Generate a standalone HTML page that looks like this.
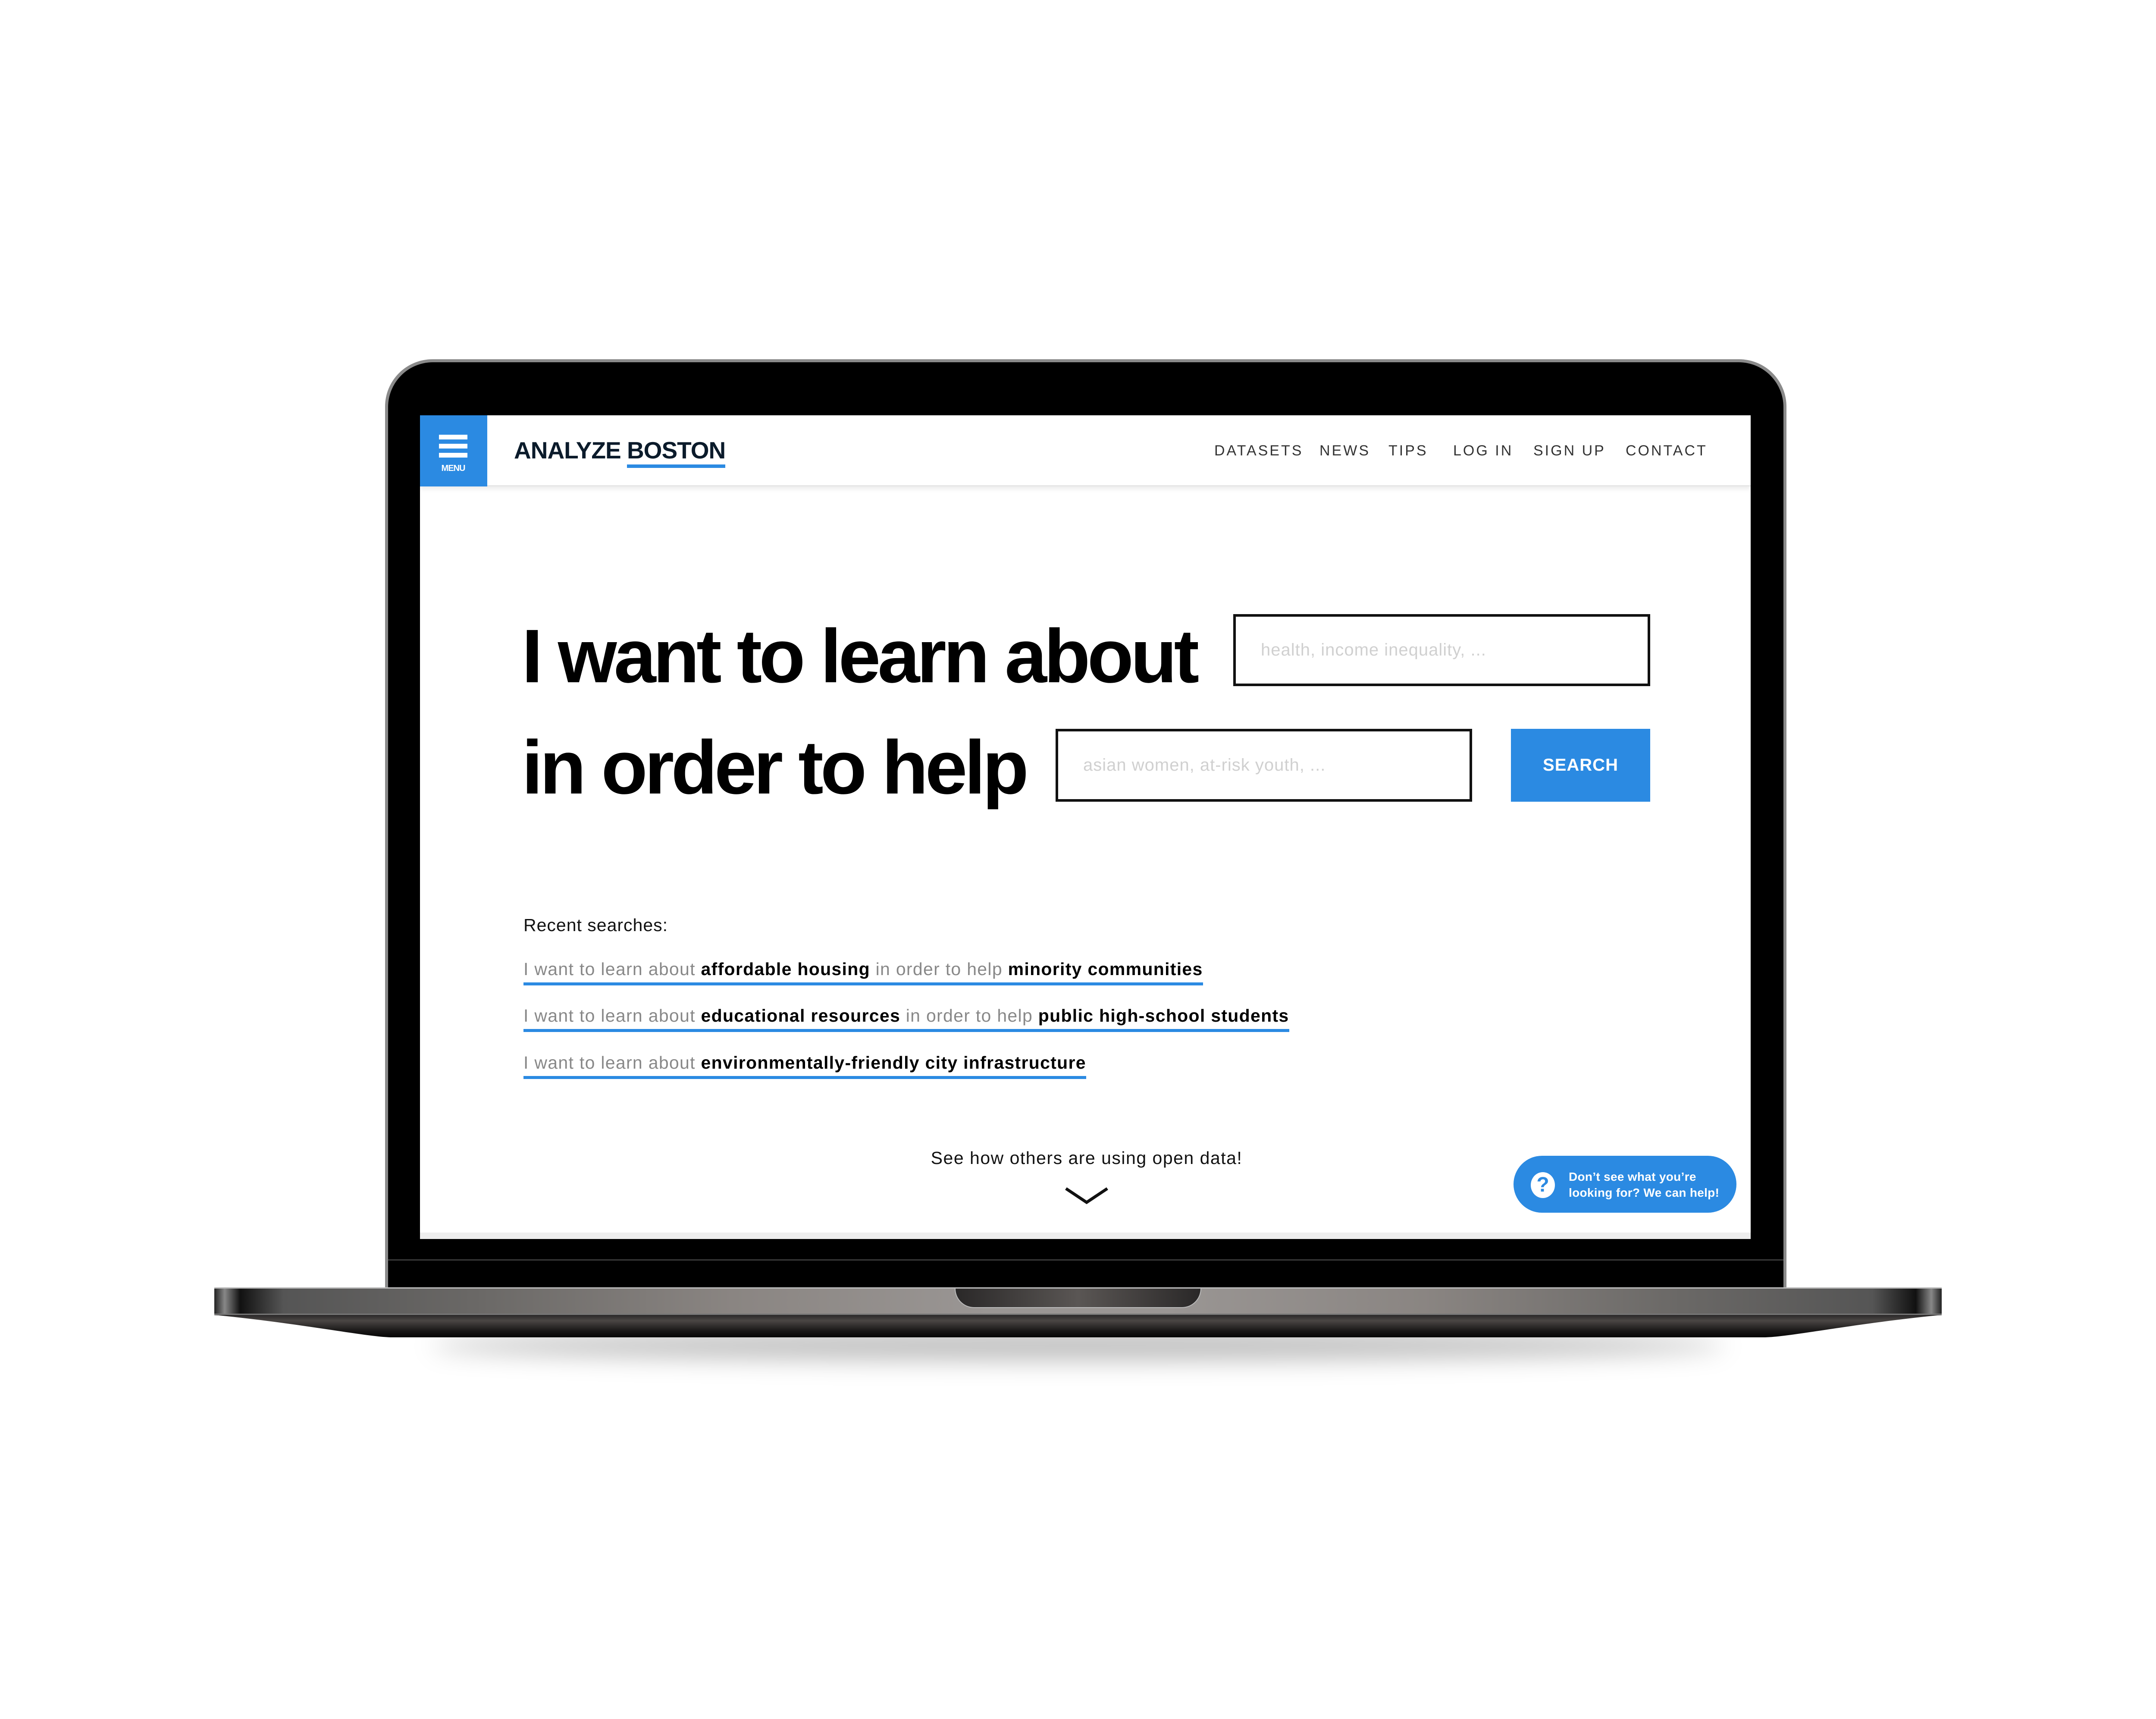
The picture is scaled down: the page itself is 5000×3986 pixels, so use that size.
<!DOCTYPE html>
<html><head><meta charset="utf-8"><style>
*{margin:0;padding:0;box-sizing:border-box}
body{width:5000px;height:3986px;background:#fff;position:relative;overflow:hidden;font-family:"Liberation Sans",Arial,sans-serif}
.a{position:absolute}
.nav{position:absolute;top:1026px;font-size:34px;letter-spacing:4px;color:#333;white-space:nowrap}
.h{position:absolute;left:1210px;font-size:176px;font-weight:bold;letter-spacing:-7px;color:#000;white-space:nowrap;line-height:1}
.inp{position:absolute;border:6px solid #111;background:#fff;font-size:40px;color:#d0d0d0;padding-left:58px;display:flex;align-items:center;letter-spacing:1px}
.lk{position:absolute;left:1214px;font-size:41px;letter-spacing:1.3px;white-space:nowrap;border-bottom:7px solid #2b8ae2;padding-bottom:8px;line-height:46px;color:#888}
.lk b{color:#000}
</style></head><body>
<!-- shadow -->
<div class="a" style="left:1000px;top:3085px;width:3000px;height:70px;border-radius:50%;background:rgba(0,0,0,0.25);filter:blur(28px)"></div>
<!-- bezel -->
<div class="a" style="left:893px;top:833px;width:3250px;height:2160px;border-radius:110px 110px 0 0;background:#8a8a8a"></div>
<div class="a" style="left:900px;top:840px;width:3236px;height:2150px;border-radius:104px 104px 0 0;background:#000"></div>
<div class="a" style="left:900px;top:2920px;width:3236px;height:3px;background:#3a3a3a"></div>
<!-- screen -->
<div class="a" style="left:974px;top:963px;width:3086px;height:1910px;background:#fff;overflow:hidden">
  <div class="a" style="left:0;top:1895px;width:3086px;height:15px;background:#eee"></div>
</div>
<!-- header -->
<div class="a" style="left:974px;top:963px;width:3086px;height:165px;background:#fff;box-shadow:0 6px 10px rgba(0,0,0,0.08);border-bottom:3px solid #e6e6e6"></div>
<div class="a" style="left:974px;top:963px;width:156px;height:165px;background:#2b8ae2"></div>
<div class="a" style="left:1018px;top:1008px;width:66px;height:11px;background:#fff"></div>
<div class="a" style="left:1018px;top:1029px;width:66px;height:11px;background:#fff"></div>
<div class="a" style="left:1018px;top:1050px;width:66px;height:11px;background:#fff"></div>
<div class="a" style="left:1014px;top:1075px;width:74px;text-align:center;font-size:20px;font-weight:bold;color:#fff;letter-spacing:-1px">MENU</div>
<div class="a" style="left:1192px;top:1017px;font-size:55px;font-weight:bold;color:#0b1b2b;white-space:nowrap;letter-spacing:-1px;line-height:1">ANALYZE <span style="border-bottom:8px solid #2b8ae2;padding-bottom:2px">BOSTON</span></div>
<div class="nav" style="left:2816px">DATASETS</div>
<div class="nav" style="left:3060px">NEWS</div>
<div class="nav" style="left:3220px">TIPS</div>
<div class="nav" style="left:3370px">LOG IN</div>
<div class="nav" style="left:3556px">SIGN UP</div>
<div class="nav" style="left:3770px">CONTACT</div>
<!-- hero -->
<div class="h" style="top:1434px">I want to learn about</div>
<div class="h" style="top:1692px">in order to help</div>
<div class="inp" style="left:2860px;top:1424px;width:967px;height:167px">health, income inequality, ...</div>
<div class="inp" style="left:2448px;top:1690px;width:966px;height:169px">asian women, at-risk youth, ...</div>
<div class="a" style="left:3504px;top:1690px;width:323px;height:169px;background:#2b8ae2;color:#fff;font-size:40px;font-weight:bold;display:flex;align-items:center;justify-content:center;letter-spacing:1px">SEARCH</div>
<!-- recent -->
<div class="a" style="left:1214px;top:2122px;font-size:41px;color:#111;letter-spacing:1px">Recent searches:</div>
<div class="lk" style="top:2224px">I want to learn about <b>affordable housing</b> in order to help <b>minority communities</b></div>
<div class="lk" style="top:2332px">I want to learn about <b>educational resources</b> in order to help <b>public high-school students</b></div>
<div class="lk" style="top:2441px">I want to learn about <b>environmentally-friendly city infrastructure</b></div>
<div class="a" style="left:1920px;top:2662px;width:1200px;text-align:center;font-size:41px;color:#111;letter-spacing:1.5px">See how others are using open data!</div>
<svg class="a" style="left:2466px;top:2748px" width="108" height="50"><polyline points="6,8 54,40 102,8" fill="none" stroke="#111" stroke-width="7"/></svg>
<!-- help pill -->
<div class="a" style="left:3510px;top:2680px;width:517px;height:132px;border-radius:66px;background:#2b8ae2"></div>
<div class="a" style="left:3550px;top:2718px;width:56px;height:60px;border-radius:50%;background:#fff;color:#2b8ae2;font-size:48px;font-weight:bold;text-align:center;line-height:60px">?</div>
<div class="a" style="left:3638px;top:2710px;font-size:28px;font-weight:bold;color:#fff;line-height:37px;white-space:nowrap;letter-spacing:0.3px">Don’t see what you’re<br>looking for? We can help!</div>
<!-- base -->
<div class="a" style="left:497px;top:2985px;width:4006px;height:63px;background:linear-gradient(90deg,#222 0%,#888 0.6%,#111 1.5%,#555 4%,#6a6866 15%,#8a8582 30%,#9a9694 45%,#9a9694 55%,#8a8582 70%,#6a6866 85%,#555 96%,#111 98.5%,#888 99.4%,#222 100%);border-top:3px solid #bbb"></div>
<div class="a" style="left:497px;top:3046px;width:4006px;height:4px;background:#777"></div>
<svg class="a" style="left:497px;top:3049px" width="4006" height="53">
<defs><linearGradient id="g" x1="0" y1="0" x2="0" y2="1"><stop offset="0" stop-color="#2a2828"/><stop offset="0.25" stop-color="#4a4644"/><stop offset="0.7" stop-color="#1a1818"/><stop offset="1" stop-color="#050505"/></linearGradient></defs>
<path d="M0,0 H4006 C3800,20 3650,52 3593,52 H413 C356,52 206,20 0,0Z" fill="url(#g)"/>
</svg>
<div class="a" style="left:2214px;top:2988px;width:572px;height:45px;border-radius:0 0 45px 45px;background:linear-gradient(90deg,#2a2828,#5a5654 50%,#2a2828);border:2px solid #bbb;border-top:none"></div>
</body></html>
